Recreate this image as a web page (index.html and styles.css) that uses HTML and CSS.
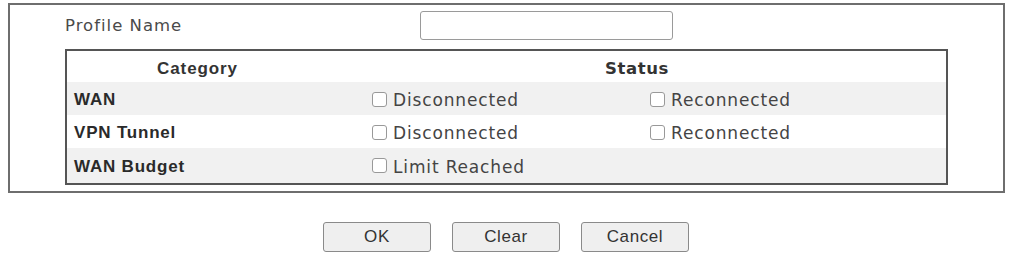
FILE: index.html
```html
<!DOCTYPE html>
<html>
<head>
<meta charset="utf-8">
<link rel="stylesheet" href="styles.css">
</head>
<body>
<div class="panel">
  <div class="profile-row">
    <span class="profile-label">Profile Name</span>
    <input class="profile-input" type="text">
  </div>
  <div class="table">
    <div class="row head">
      <div class="cat-head">Category</div>
      <div class="status-head">Status</div>
    </div>
    <div class="row shaded">
      <div class="label">WAN</div>
      <div class="opt opt-first"><span class="box"></span>Disconnected</div>
      <div class="opt"><span class="box"></span>Reconnected</div>
    </div>
    <div class="row">
      <div class="label">VPN Tunnel</div>
      <div class="opt opt-first"><span class="box"></span>Disconnected</div>
      <div class="opt"><span class="box"></span>Reconnected</div>
    </div>
    <div class="row shaded last">
      <div class="label">WAN Budget</div>
      <div class="opt opt-first"><span class="box"></span>Limit Reached</div>
    </div>
  </div>
</div>
<div class="buttons">
  <button class="btn">OK</button>
  <button class="btn">Clear</button>
  <button class="btn">Cancel</button>
</div>
</body>
</html>
```
FILE: styles.css
```css
html, body {
  margin: 0;
  padding: 0;
  background: #ffffff;
}
body {
  width: 1010px;
  height: 259px;
  overflow: hidden;
}
.panel {
  box-sizing: border-box;
  margin: 3px 0 0 8px;
  width: 997px;
  height: 190px;
  border: 2px solid #6e6e6e;
  padding: 0 0 0 55px;
}
.profile-row {
  display: flex;
  align-items: center;
  height: 44px;
}
.profile-label {
  font-family: "DejaVu Sans", sans-serif;
  font-size: 16.5px;
  letter-spacing: 1px;
  color: #4a4a4a;
  width: 355px;
  padding-bottom: 4px;
}
.profile-input {
  box-sizing: border-box;
  width: 253px;
  height: 29px;
  border: 1px solid #9a9a9a;
  border-radius: 3px;
  background: #fff;
  margin: 0;
  padding: 0;
  margin-bottom: 4px;
}
.table {
  box-sizing: border-box;
  width: 883px;
  border: 2px solid #555;
}
.row {
  box-sizing: border-box;
  display: flex;
  align-items: center;
  height: 33px;
  padding-top: 3px;
}
.row.head {
  height: 31px;
  padding-top: 4px;
}
.row.last {
  height: 35px;
  padding-top: 2px;
}
.shaded {
  background: #f1f1f1;
}
.cat-head {
  width: 261px;
  text-align: center;
  font-family: "Liberation Sans", Arial, sans-serif;
  font-weight: bold;
  font-size: 17px;
  letter-spacing: 0.9px;
  color: #333;
}
.status-head {
  flex: 1;
  text-align: center;
  font-family: "DejaVu Sans", sans-serif;
  font-weight: bold;
  font-size: 16.5px;
  letter-spacing: 0.6px;
  color: #333;
}
.label {
  box-sizing: border-box;
  width: 305px;
  padding-left: 7px;
  font-family: "Liberation Sans", Arial, sans-serif;
  font-weight: bold;
  font-size: 17px;
  letter-spacing: 0.8px;
  color: #2a2a2a;
}
.opt {
  display: flex;
  align-items: center;
  font-family: "DejaVu Sans", sans-serif;
  font-size: 17px;
  letter-spacing: 0.85px;
  color: #444;
}
.opt-first {
  width: 278px;
}
.box {
  box-sizing: border-box;
  display: inline-block;
  width: 15px;
  height: 15px;
  border: 1px solid #999;
  border-radius: 3px;
  background: #fff;
  margin-right: 6px;
  margin-top: -2px;
}
.buttons {
  display: flex;
  justify-content: center;
  gap: 21px;
  margin-top: 29px;
  padding-left: 2px;
}
.btn {
  box-sizing: border-box;
  width: 108px;
  height: 30px;
  border: 1px solid #8a8a8a;
  border-radius: 3px;
  background: #efefef;
  font-family: "Liberation Sans", Arial, sans-serif;
  font-size: 17px;
  letter-spacing: 0.6px;
  color: #333;
  padding: 0;
}
```
